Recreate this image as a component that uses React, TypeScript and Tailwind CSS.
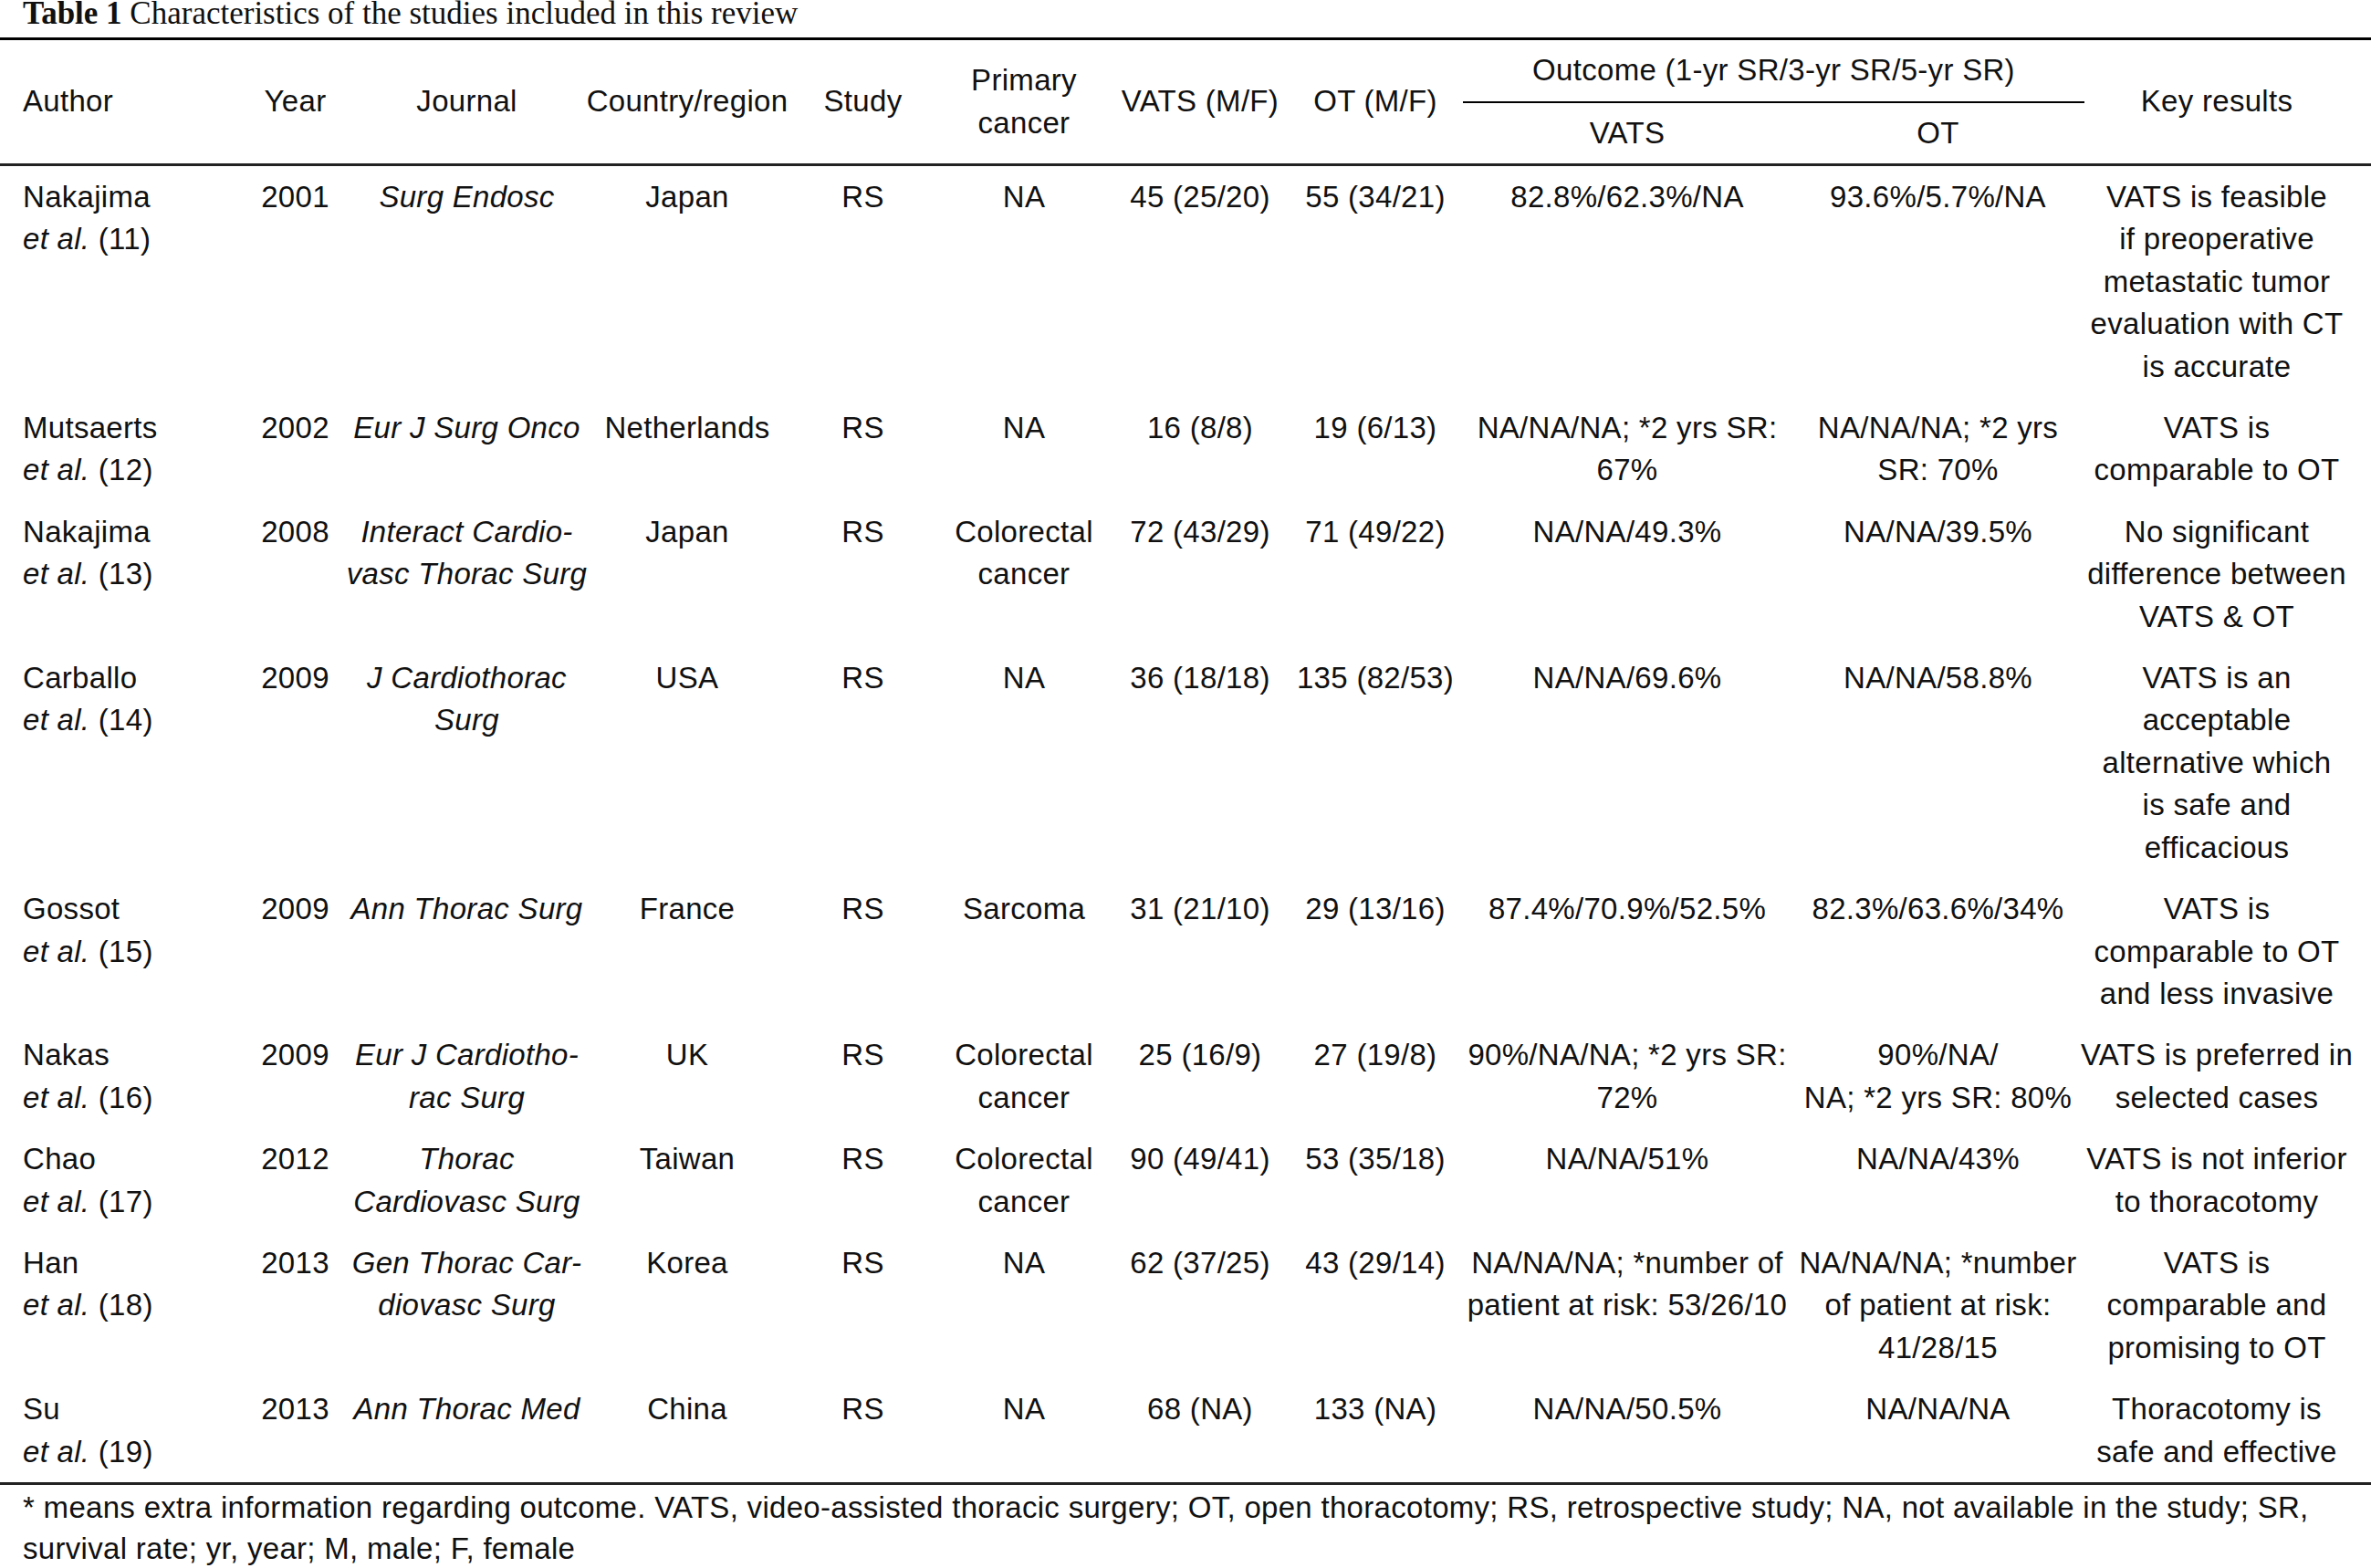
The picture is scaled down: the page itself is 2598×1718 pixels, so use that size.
type Row = {
  author: string
  ref: string
  year: string
  journal: string[]
  country: string
  study: string
  primary: string[]
  vats: string
  ot: string
  vo: string[]
  oo: string[]
  key: string[]
}

const rows: Row[] = [
  {
    author: 'Nakajima',
    ref: '(11)',
    year: '2001',
    journal: ['Surg Endosc'],
    country: 'Japan',
    study: 'RS',
    primary: ['NA'],
    vats: '45 (25/20)',
    ot: '55 (34/21)',
    vo: ['82.8%/62.3%/NA'],
    oo: ['93.6%/5.7%/NA'],
    key: ['VATS is feasible', 'if preoperative', 'metastatic tumor', 'evaluation with CT', 'is accurate'],
  },
  {
    author: 'Mutsaerts',
    ref: '(12)',
    year: '2002',
    journal: ['Eur J Surg Onco'],
    country: 'Netherlands',
    study: 'RS',
    primary: ['NA'],
    vats: '16 (8/8)',
    ot: '19 (6/13)',
    vo: ['NA/NA/NA; *2 yrs SR:', '67%'],
    oo: ['NA/NA/NA; *2 yrs', 'SR: 70%'],
    key: ['VATS is', 'comparable to OT'],
  },
  {
    author: 'Nakajima',
    ref: '(13)',
    year: '2008',
    journal: ['Interact Cardio-', 'vasc Thorac Surg'],
    country: 'Japan',
    study: 'RS',
    primary: ['Colorectal', 'cancer'],
    vats: '72 (43/29)',
    ot: '71 (49/22)',
    vo: ['NA/NA/49.3%'],
    oo: ['NA/NA/39.5%'],
    key: ['No significant', 'difference between', 'VATS & OT'],
  },
  {
    author: 'Carballo',
    ref: '(14)',
    year: '2009',
    journal: ['J Cardiothorac', 'Surg'],
    country: 'USA',
    study: 'RS',
    primary: ['NA'],
    vats: '36 (18/18)',
    ot: '135 (82/53)',
    vo: ['NA/NA/69.6%'],
    oo: ['NA/NA/58.8%'],
    key: ['VATS is an', 'acceptable', 'alternative which', 'is safe and', 'efficacious'],
  },
  {
    author: 'Gossot',
    ref: '(15)',
    year: '2009',
    journal: ['Ann Thorac Surg'],
    country: 'France',
    study: 'RS',
    primary: ['Sarcoma'],
    vats: '31 (21/10)',
    ot: '29 (13/16)',
    vo: ['87.4%/70.9%/52.5%'],
    oo: ['82.3%/63.6%/34%'],
    key: ['VATS is', 'comparable to OT', 'and less invasive'],
  },
  {
    author: 'Nakas',
    ref: '(16)',
    year: '2009',
    journal: ['Eur J Cardiotho-', 'rac Surg'],
    country: 'UK',
    study: 'RS',
    primary: ['Colorectal', 'cancer'],
    vats: '25 (16/9)',
    ot: '27 (19/8)',
    vo: ['90%/NA/NA; *2 yrs SR:', '72%'],
    oo: ['90%/NA/', 'NA; *2 yrs SR: 80%'],
    key: ['VATS is preferred in', 'selected cases'],
  },
  {
    author: 'Chao',
    ref: '(17)',
    year: '2012',
    journal: ['Thorac', 'Cardiovasc Surg'],
    country: 'Taiwan',
    study: 'RS',
    primary: ['Colorectal', 'cancer'],
    vats: '90 (49/41)',
    ot: '53 (35/18)',
    vo: ['NA/NA/51%'],
    oo: ['NA/NA/43%'],
    key: ['VATS is not inferior', 'to thoracotomy'],
  },
  {
    author: 'Han',
    ref: '(18)',
    year: '2013',
    journal: ['Gen Thorac Car-', 'diovasc Surg'],
    country: 'Korea',
    study: 'RS',
    primary: ['NA'],
    vats: '62 (37/25)',
    ot: '43 (29/14)',
    vo: ['NA/NA/NA; *number of', 'patient at risk: 53/26/10'],
    oo: ['NA/NA/NA; *number', 'of patient at risk:', '41/28/15'],
    key: ['VATS is', 'comparable and', 'promising to OT'],
  },
  {
    author: 'Su',
    ref: '(19)',
    year: '2013',
    journal: ['Ann Thorac Med'],
    country: 'China',
    study: 'RS',
    primary: ['NA'],
    vats: '68 (NA)',
    ot: '133 (NA)',
    vo: ['NA/NA/50.5%'],
    oo: ['NA/NA/NA'],
    key: ['Thoracotomy is', 'safe and effective'],
  },
]

const cols =
  'grid grid-cols-[264px_119px_257px_226px_159px_194px_192px_192px_360px_321px_314px]'

function Lines({ lines, italic = false }: { lines: string[]; italic?: boolean }) {
  return (
    <div className={`flex flex-col items-center ${italic ? 'italic' : ''}`}>
      {lines.map((l, i) => (
        <span key={i} className="whitespace-nowrap">
          {l}
        </span>
      ))}
    </div>
  )
}

export default function App() {
  return (
    <div className="min-h-screen w-[2598px] bg-white text-[#111] font-['Liberation_Sans',Arial,sans-serif] text-[33px] tracking-[0.3px] leading-[46.4px]">
      <div className="h-[41px] pl-[25px] font-['Liberation_Serif','Times_New_Roman',serif] text-[35px] tracking-normal leading-[30px]">
        <span className="font-bold">Table 1</span> Characteristics of the studies included in this review
      </div>

      <div className="border-t-[3px] border-black">
        {/* header */}
        <div className={`${cols} grid-rows-[69px_66px] border-b-[3px] border-[#222]`}>
          <div className="row-span-2 flex items-center pl-[25px]">Author</div>
          <div className="row-span-2 flex items-center justify-center">Year</div>
          <div className="row-span-2 flex items-center justify-center">Journal</div>
          <div className="row-span-2 flex items-center justify-center">Country/region</div>
          <div className="row-span-2 flex items-center justify-center">Study</div>
          <div className="row-span-2 flex items-center justify-center">
            <Lines lines={['Primary', 'cancer']} />
          </div>
          <div className="row-span-2 flex items-center justify-center">VATS (M/F)</div>
          <div className="row-span-2 flex items-center justify-center">OT (M/F)</div>
          <div className="col-span-2 flex items-center justify-center border-b-2 border-black">
            Outcome (1-yr SR/3-yr SR/5-yr SR)
          </div>
          <div className="row-span-2 col-start-11 row-start-1 flex items-center justify-center pr-[24px]">
            Key results
          </div>
          <div className="col-start-9 row-start-2 flex items-center justify-center">VATS</div>
          <div className="col-start-10 row-start-2 flex items-center justify-center">OT</div>
        </div>

        {/* body */}
        <div className="border-b-[3px] border-[#222]">
          {rows.map((r, i) => (
            <div key={i} className={`${cols} pt-[11px] pb-[10px]`}>
              <div className="pl-[25px] whitespace-nowrap">
                <div>{r.author}</div>
                <div>
                  <span className="italic">et al.</span> {r.ref}
                </div>
              </div>
              <Lines lines={[r.year]} />
              <Lines lines={r.journal} italic />
              <Lines lines={[r.country]} />
              <Lines lines={[r.study]} />
              <Lines lines={r.primary} />
              <Lines lines={[r.vats]} />
              <Lines lines={[r.ot]} />
              <Lines lines={r.vo} />
              <Lines lines={r.oo} />
              <div className="pr-[24px]">
                <Lines lines={r.key} />
              </div>
            </div>
          ))}
        </div>

        <div className="pl-[25px] pt-[2px] leading-[45px]">
          <div className="whitespace-nowrap">
            * means extra information regarding outcome. VATS, video-assisted thoracic surgery; OT, open thoracotomy; RS, retrospective study; NA, not available in the study; SR,
          </div>
          <div>survival rate; yr, year; M, male; F, female</div>
        </div>
      </div>
    </div>
  )
}
